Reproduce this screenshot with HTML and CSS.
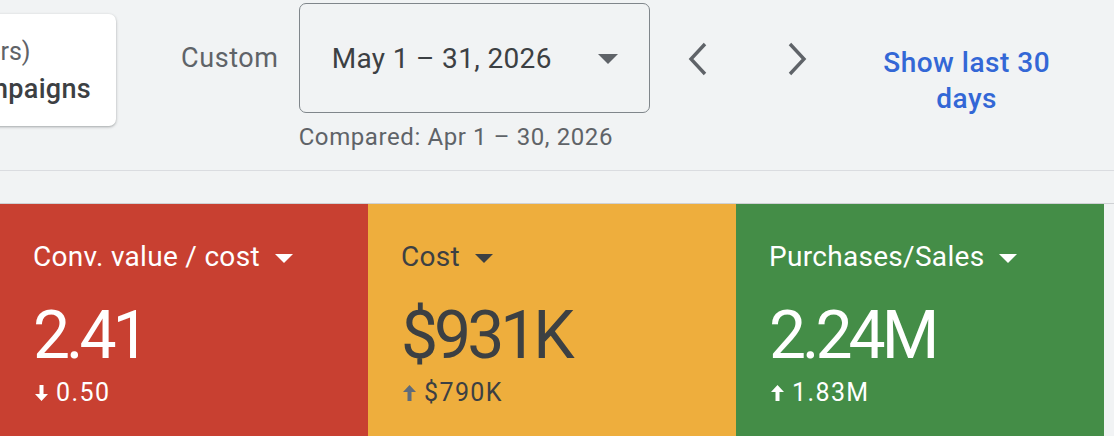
FILE: index.html
```html
<!DOCTYPE html>
<html lang="en">
<head>
<meta charset="utf-8">
<title>Overview</title>
<link rel="stylesheet" href="styles.css">
</head>
<body>
<div class="page">
  <header class="toolbar">
    <div class="scope-card">
      <div class="scope-line scope-sub">Workspace (2 filters)</div>
      <div class="scope-line scope-main">All campaigns</div>
    </div>
    <div class="range-label">Custom</div>
    <div class="range-group">
      <button class="range-picker" type="button">
        <span class="range-text">May 1 – 31, 2026</span>
        <svg class="caret" width="20" height="10" viewBox="0 0 20 10"><path d="M0 0h20L10 10z" fill="#5f6368"/></svg>
      </button>
      <div class="range-compare">Compared: Apr 1 – 30, 2026</div>
    </div>
    <div class="nav-buttons">
      <button class="nav-btn" type="button" aria-label="Previous period">
        <svg width="22" height="34" viewBox="0 0 22 34"><path d="M18 2L4 17l14 15" fill="none" stroke="#5f6368" stroke-width="3.4"/></svg>
      </button>
      <button class="nav-btn" type="button" aria-label="Next period">
        <svg width="22" height="34" viewBox="0 0 22 34"><path d="M4 2l14 15L4 32" fill="none" stroke="#5f6368" stroke-width="3.4"/></svg>
      </button>
    </div>
    <a class="last-link" href="#">Show last 30 days</a>
  </header>
  <div class="spacer"></div>
  <section class="scorecards">
    <div class="score score-red">
      <div class="score-title">Conv. value / cost
        <svg class="caret" width="18" height="9" viewBox="0 0 20 10"><path d="M0 0h20L10 10z" fill="currentColor"/></svg>
      </div>
      <div class="score-value">2.41</div>
      <div class="score-delta">
        <svg width="13" height="16" viewBox="0 0 13 16"><path d="M4.5 0h4v9H13l-6.5 7L0 9h4.5z" fill="currentColor"/></svg>
        <span>0.50</span>
      </div>
    </div>
    <div class="score score-yellow">
      <div class="score-title">Cost
        <svg class="caret" width="18" height="9" viewBox="0 0 20 10"><path d="M0 0h20L10 10z" fill="currentColor"/></svg>
      </div>
      <div class="score-value">$931K</div>
      <div class="score-delta">
        <svg class="up-muted" width="13" height="16" viewBox="0 0 13 16"><path d="M4.5 16h4V7H13L6.5 0 0 7h4.5z" fill="currentColor"/></svg>
        <span>$790K</span>
      </div>
    </div>
    <div class="score score-green">
      <div class="score-title">Purchases/Sales
        <svg class="caret" width="18" height="9" viewBox="0 0 20 10"><path d="M0 0h20L10 10z" fill="currentColor"/></svg>
      </div>
      <div class="score-value">2.24M</div>
      <div class="score-delta">
        <svg width="13" height="16" viewBox="0 0 13 16"><path d="M4.5 16h4V7H13L6.5 0 0 7h4.5z" fill="currentColor"/></svg>
        <span>1.83M</span>
      </div>
    </div>
  </section>
</div>
</body>
</html>
```

FILE: styles.css
```css
* {
  box-sizing: border-box;
}

html, body {
  margin: 0;
  height: 100%;
}

body {
  background: #f1f3f4;
  font-family: Roboto, "Liberation Sans", Arial, sans-serif;
  color: #3c4043;
  overflow: hidden;
}

.page {
  width: 1114px;
}

/* top toolbar with scope card and date range */
.toolbar {
  display: flex;
  align-items: flex-start;
  height: 171px;
  padding-top: 3px;
  border-bottom: 1px solid #dadce0;
}

.scope-card {
  flex: none;
  width: 316px;
  margin-left: -200px;
  margin-top: 11px;
  height: 112px;
  background: #fff;
  border-radius: 7px;
  box-shadow: 0 1px 3px rgba(60, 64, 67, 0.3), 0 1px 2px rgba(60, 64, 67, 0.15);
  display: flex;
  flex-direction: column;
  justify-content: center;
  gap: 4px;
  padding-top: 4px;
  white-space: nowrap;
}

.scope-line {
  text-align: right;
}

.scope-sub {
  font-size: 25px;
  line-height: 30px;
  color: #5f6368;
  margin-right: 93px;
}

.scope-main {
  font-size: 27px;
  line-height: 36px;
  font-weight: 500;
  letter-spacing: 0.3px;
  color: #3c4043;
  margin-right: 25px;
}

.range-label {
  margin-left: 65px;
  margin-top: 39px;
  font-size: 27px;
  color: #5f6368;
  letter-spacing: 0.6px;
}

.range-group {
  margin-left: 20px;
  display: flex;
  flex-direction: column;
}

.range-picker {
  width: 351px;
  height: 110px;
  border: 1.5px solid #80868b;
  border-radius: 7px;
  background: transparent;
  display: flex;
  align-items: center;
  justify-content: space-between;
  padding: 0 31px 0 32px;
  font: inherit;
  font-size: 28px;
  letter-spacing: 0.35px;
  color: #3c4043;
  cursor: pointer;
}

.range-picker .caret {
  margin-top: 2px;
}

.range-compare {
  margin-top: 10px;
  font-size: 24px;
  color: #5f6368;
  letter-spacing: 0.6px;
}

.nav-buttons {
  display: flex;
  gap: 42px;
  margin-left: 20px;
  margin-top: 28px;
}

.nav-btn {
  width: 57px;
  height: 56px;
  border: 0;
  background: none;
  padding: 0;
  display: flex;
  align-items: center;
  justify-content: center;
  cursor: pointer;
}

.last-link {
  margin-left: 42px;
  margin-top: 42px;
  width: 198px;
  text-align: center;
  font-size: 28px;
  font-weight: 500;
  letter-spacing: 0.5px;
  line-height: 36px;
  color: #3367d6;
  text-decoration: none;
}

.spacer {
  height: 33px;
  border-bottom: 1px solid #cfd1d4;
}

/* metric scorecards */
.scorecards {
  display: grid;
  grid-template-columns: repeat(3, 368px);
  height: 240px;
}

.score {
  padding: 38px 0 0 33px;
  color: #fff;
}

.score-red {
  background: #c84031;
}

.score-yellow {
  background: #eeae3d;
  color: #3c4043;
}

.score-green {
  background: #448d47;
}

.score-title {
  display: flex;
  align-items: center;
  gap: 15px;
  font-size: 28px;
  letter-spacing: 0.3px;
  line-height: 30px;
}

.score-title .caret {
  margin-top: 2px;
}

.score-value {
  margin-top: 24px;
  font-size: 66px;
  letter-spacing: -4px;
  line-height: 80px;
}

.score-delta {
  display: flex;
  align-items: center;
  gap: 8px;
  margin-top: 2px;
  font-size: 25px;
  letter-spacing: 1.4px;
  line-height: 30px;
}

.score-delta svg {
  margin-left: 2px;
}

.up-muted {
  color: #5f6b7a;
}
```
